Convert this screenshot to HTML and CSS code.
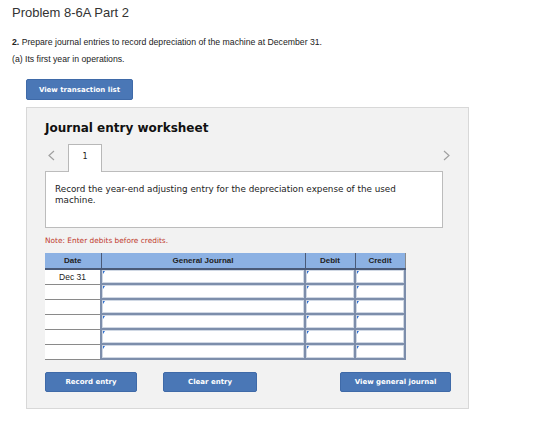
FILE: index.html
```html
<!DOCTYPE html>
<html lang="en">
<head>
    <meta charset="UTF-8">
    <title>Problem 8-6A Part 2</title>
    <link rel="stylesheet" href="styles.css">
</head>
<body>
    <div class="page">
        <h1 class="title">Problem 8-6A Part 2</h1>
        <p class="question"><b>2.</b> Prepare journal entries to record depreciation of the machine at December 31.</p>
        <p class="sub">(a) Its first year in operations.</p>

        <button class="btn btn-list">View transaction list</button>

        <!-- Worksheet panel -->
        <div class="worksheet">
            <h2>Journal entry worksheet</h2>

            <div class="tab-row">
                <span class="chev">
                    <svg width="7" height="11" viewBox="0 0 7 11"><polyline points="6,1 1,5.5 6,10" fill="none" stroke="#a0a0a0" stroke-width="1.2"/></svg>
                </span>
                <div class="tab">1</div>
                <span class="chev chev-right">
                    <svg width="7" height="11" viewBox="0 0 7 11"><polyline points="1,1 6,5.5 1,10" fill="none" stroke="#a0a0a0" stroke-width="1.2"/></svg>
                </span>
            </div>

            <div class="desc">
                Record the year-end adjusting entry for the depreciation expense of the used machine.
            </div>

            <p class="note">Note: Enter debits before credits.</p>

            <table class="journal">
                <thead>
                    <tr>
                        <th class="c-date">Date</th>
                        <th class="c-acct">General Journal</th>
                        <th class="c-num">Debit</th>
                        <th class="c-num">Credit</th>
                    </tr>
                </thead>
                <tbody>
                    <tr><td class="date">Dec 31</td><td class="in"></td><td class="in"></td><td class="in"></td></tr>
                    <tr><td class="date"></td><td class="in"></td><td class="in"></td><td class="in"></td></tr>
                    <tr><td class="date"></td><td class="in"></td><td class="in"></td><td class="in"></td></tr>
                    <tr><td class="date"></td><td class="in"></td><td class="in"></td><td class="in"></td></tr>
                    <tr><td class="date"></td><td class="in"></td><td class="in"></td><td class="in"></td></tr>
                    <tr><td class="date"></td><td class="in"></td><td class="in"></td><td class="in"></td></tr>
                </tbody>
            </table>

            <div class="actions">
                <button class="btn btn-record">Record entry</button>
                <button class="btn btn-clear">Clear entry</button>
                <button class="btn btn-view">View general journal</button>
            </div>
        </div>
    </div>
</body>
</html>
```

FILE: styles.css
```css
* {
    margin: 0;
    padding: 0;
    box-sizing: border-box;
}

body {
    font-family: "Liberation Sans", Arial, sans-serif;
    background-color: #ffffff;
    color: #222;
}

.page {
    padding: 5px 12px 0 12px;
}

.title {
    font-size: 13px;
    font-weight: normal;
    line-height: 16px;
    color: #333;
}

.question {
    font-size: 8.7px;
    line-height: 10px;
    margin-top: 16px;
}

.sub {
    font-size: 8.7px;
    line-height: 10px;
    margin-top: 7px;
}

.btn {
    font-family: "DejaVu Sans", Verdana, sans-serif;
    font-weight: bold;
    font-size: 7px;
    color: white;
    background-color: #4a77b6;
    border: 1px solid #3f6aa8;
    border-radius: 2px;
    height: 21px;
    cursor: pointer;
}

.btn-list {
    display: block;
    width: 107px;
    margin: 15px 0 0 14px;
}

/* Worksheet panel */
.worksheet {
    width: 443px;
    margin: 7px 0 0 14px;
    background-color: #f2f2f2;
    border: 1px solid #d8d8d8;
    padding: 13px 25px 16px 18px;
}

.worksheet h2 {
    font-family: "DejaVu Sans", Verdana, sans-serif;
    font-size: 12px;
    line-height: 15px;
    color: #111;
}

.tab-row {
    display: flex;
    align-items: flex-start;
    width: 405px;
    margin-top: 8px;
}

.chev {
    width: 23px;
    padding: 6px 0 0 3px;
    display: flex;
}

.chev-right {
    margin-left: auto;
    width: 7px;
    padding-left: 0;
}

.tab {
    width: 34px;
    height: 28px;
    margin-bottom: -1px;
    background-color: white;
    border: 1px solid #b8b8b8;
    border-bottom: none;
    font-family: "DejaVu Sans", Verdana, sans-serif;
    font-size: 8px;
    text-align: center;
    padding-top: 7px;
    position: relative;
    z-index: 1;
}

.desc {
    width: 398px;
    height: 57px;
    background-color: white;
    border: 1px solid #bcbcbc;
    padding: 12px 9px;
    font-family: "DejaVu Sans", Verdana, sans-serif;
    font-size: 8.8px;
    line-height: 11px;
    color: #222;
}

.note {
    font-family: "DejaVu Sans", Verdana, sans-serif;
    font-size: 7.4px;
    line-height: 9px;
    color: #c0392b;
    margin-top: 8px;
}

/* Journal table */
.journal {
    border-collapse: collapse;
    margin-top: 8px;
    width: 360px;
    table-layout: fixed;
}

.journal th {
    background-color: #8cb1e3;
    font-size: 8px;
    font-weight: bold;
    color: #222;
    height: 16px;
    border-right: 1px solid #4a5a78;
    border-bottom: 2px solid #4a5a78;
}

.journal th:last-child {
    border-right: 1px solid #8a8a8a;
}

.c-date { width: 56px; }
.c-acct { width: 204px; }
.c-num { width: 50px; }

.journal td {
    height: 15px;
    background-color: white;
}

.journal td.date {
    font-size: 8.5px;
    text-align: center;
    color: #222;
    border-bottom: 1px solid #8a8a8a;
    border-right: 1px solid #4a5a78;
}

.journal td.in {
    border: 2px solid #7d8eab;
    box-shadow: inset 0 0 0 1px #d0d8e4;
    position: relative;
}

.journal td.in::before {
    content: "";
    position: absolute;
    top: 1px;
    left: 1px;
    border-top: 3px solid #2f6fd0;
    border-right: 2px solid transparent;
}

/* Action buttons */
.actions {
    display: flex;
    width: 406px;
    margin-top: 12px;
}

.btn-record {
    width: 92px;
    height: 20px;
}

.btn-clear {
    width: 94px;
    height: 20px;
    margin-left: 26px;
}

.btn-view {
    width: 111px;
    height: 20px;
    margin-left: auto;
}
```
